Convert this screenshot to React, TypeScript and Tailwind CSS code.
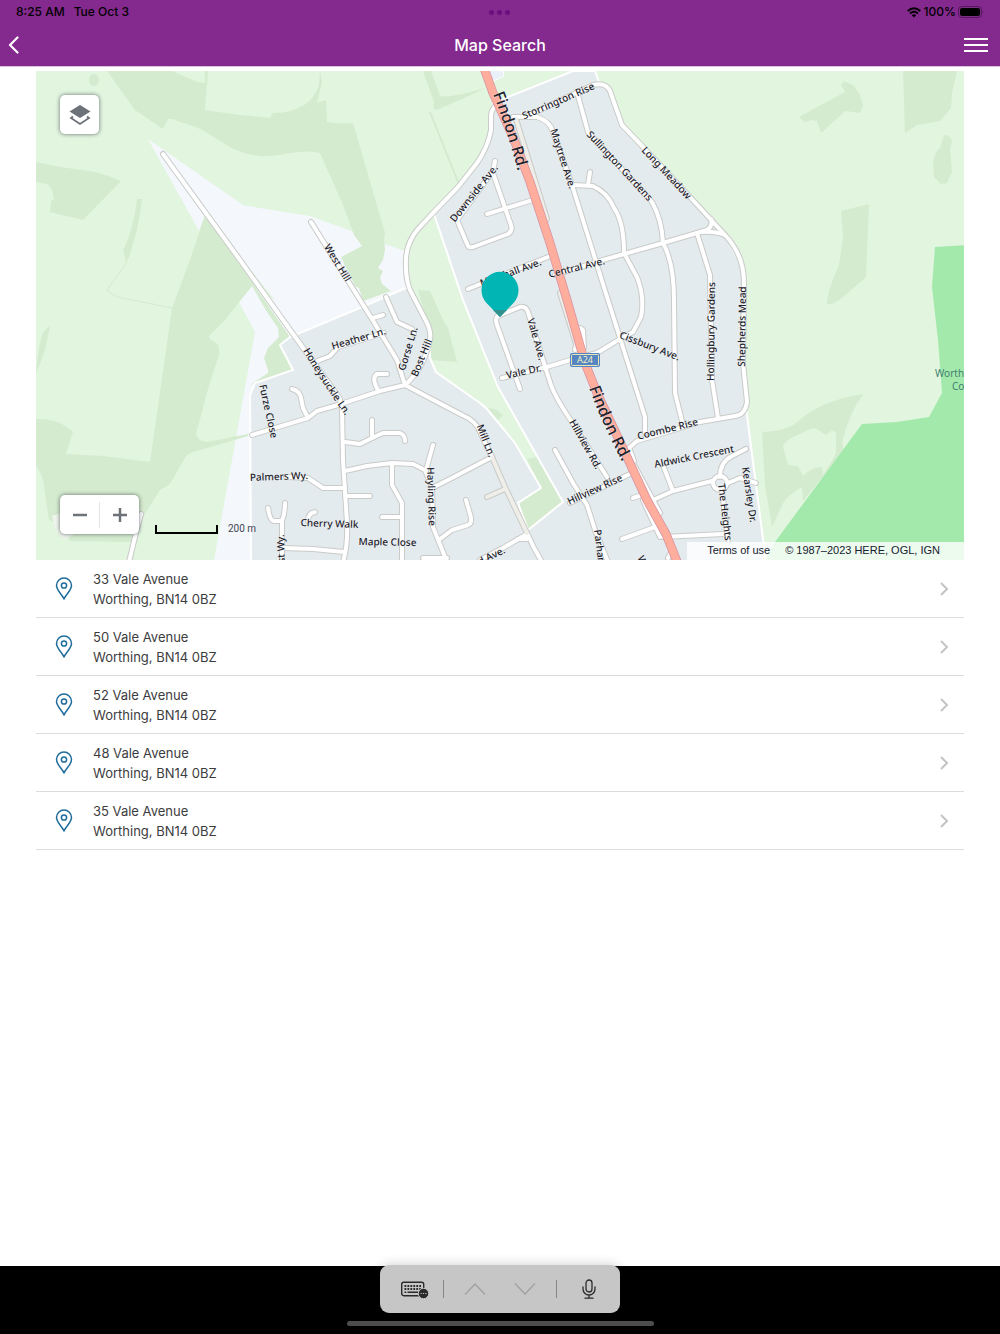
import React from "react";

type Label = { t: string; a: [number, number]; b: [number, number]; size?: number };

const WOODS = [
  "M107 71L135 110L163 129L168 119Q172 118 180 122Q198 127 206 132L225 144Q240 154 260 156Q270 157 290 153Q310 150 320 153L343 205L354 235L362 246L341 257L355 286L359 288L363 301L391 291L382 284L380 277L383 271L378 268L383 260L385 250L384 240L385 233L353 123Q340 124 327 122L326 100L317 103L322 82L320 71L319 85Q312 103 300 107Q290 113 273 113L270 118L240 115L205 110L208 71L205 71L205 83L197 82L172 71Z",
  "M36 162L60 167L90 171Q108 175 121 181L83 220L50 212L51 201L54 199Q52 186 47 184L36 182Z",
  "M137 199L142 199Q140 215 137 230L129 257L126 262L123 250Q133 232 137 199Z",
  "M205 215L190 260L172 308L150 462L103 456L66 454L73 432Q58 418 36 419L36 466Q43 475 44 486L49 520L60 525L70 541L131 542L146 512L160 490L170 484L183 461Q187 452 200 450L248 436L248 434L207 442Q198 441 196 434L208 389L219 355Q220 345 215 342Q207 339 210 335L225 320L252 286L267 312L278 328L279 337L268 348L264 358L268 370L268 373L250 385L293 370L280 345L290 337Z",
  "M423 71L431 71L440 96Q452 98 485 88L473 94L437 110L433 108L434 102Z",
  "M418 290L430 291L443 320L448 328L457 362L430 360L431 335Z",
  "M799 117L845 92L841 85L844 81L853 85L860 95L863 105L860 113L845 111L821 133L817 121L812 120L805 122Z",
  "M903 71L957 71L952 93L951 108L940 121L917 125L905 133Z",
  "M944 135Q951 135 952 142L950 149L952 172L947 183L941 184L934 177L933 163L936 152L940 148Z",
  "M841 211L869 204L866 277L843 297Q832 306 827 304Q827 292 839 265L843 237Z",
  "M762 432Q780 432 795 424Q820 400 864 394Q850 410 842 443L844 450L803 501L802 487Q790 493 783 503L772 527L765 485Z",
  "M518 503L541 488L527 459L538 457L563 502L528 530Z",
  "M487 408L495 409L503 415L498 420Z",
  "M36 374Q37 352 43 332L50 326L45 350Z",
];

const CLEARINGS = [
  "M783 447Q784 440 802 433Q812 427 817 429L826 435Q834 427 836 434L836 453L832 461L823 475L822 467Q812 467 803 476L798 466L788 465Z",
];

const ROADS = [
  "M163 154L240 260L283 320L340 399L342 410L343 460L347 523Q348 545 343 562",
  "M311 222L372 319L383 337L397 360L405 385",
  "M373 318L383 315",
  "M386 297L397 322L412 329L414 334",
  "M498 104Q491 109 491 116L491 130Q488 147 477 163L458 187L433 213L418 229Q407 242 406 258Q405 277 410 290L425 319Q433 333 429 343Q424 368 405 385",
  "M405 385L462 415Q477 421 481 434L492 457",
  "M527 533L534 548L542 562",
  "M405 385L380 391L338 405L317 411L308 418L252 435",
  "M292 389Q300 391 301 398L303 408L308 418",
  "M387 374L377 374Q371 378 378 390",
  "M315 362L330 356L338 347L384 333",
  "M345 442L360 444L372 438L383 433L400 433Q405 435 405 441",
  "M372 420L372 438",
  "M345 471L367 466L392 463L413 464L425 470L432 487L433 527L447 562",
  "M433 445L426 470",
  "M392 463L392 485L402 503L402 562",
  "M382 517L402 517",
  "M345 488L323 488L308 478L286 477",
  "M345 496L370 496",
  "M268 508Q270 521 274 521L282 521Q285 514 285 503",
  "M282 521L282 562",
  "M283 548L313 549L344 552",
  "M315 512Q308 513 308 521",
  "M440 539L452 530L468 525Q473 523 470 514L466 500",
  "M423 558L447 558",
  "M434 487L450 479L492 457",
  "M527 534L503 548L480 560",
  "M527 539L518 539",
  "M495 161L493 171L457 220L468 246Q469 248 473 247L508 234Q513 231 511 225L493 173",
  "M487 214L533 200",
  "M468 289L548 257",
  "M555 275L603 260L663 243L707 230Q713 226 711 219",
  "M700 232Q715 231 725 235",
  "M513 117L525 117L593 85Q606 82 610 91L622 125L643 147L690 197L725 235Q744 255 744 283L743 363L747 402Q745 415 735 416L700 422L637 441L629 448L634 461",
  "M525 117L537 117Q550 121 553 132L572 185L608 300L620 338L645 417L645 433",
  "M573 185L593 186Q608 193 614 208Q624 222 624 253L637 277Q645 297 641 317L633 332L620 339",
  "M590 172L588 185",
  "M577 92L588 132L652 202Q662 220 663 243Q674 263 674 300L675 393L683 425",
  "M697 233L710 275L712 380L718 418",
  "M520 389L497 325Q494 317 500 315L520 307Q526 306 528 312L543 360L550 382Q554 396 572 422L607 477",
  "M502 378L547 367L570 360L597 353L620 339",
  "M570 503L632 473",
  "M555 450L573 483L587 505L595 530L608 562",
  "M633 498L645 494",
  "M653 500L673 491L712 481",
  "M728 483L740 478L756 483",
  "M720 477Q720 462 732 456L746 449",
  "M664 468L673 491",
  "M622 539L655 527",
  "M643 500L660 537",
  "M633 463L660 513",
  "M663 537L723 534",
  "M722 490L728 540",
  "M713 483a7 7 0 1 0 14 0a7 7 0 1 0 -14 0",
  "M575 350L580 328L583 330L584 348",
  "M668 558L672 551",
];

const LANES = [
  "M492 457L505 487L527 533",
  "M487 497L505 489",
  "M516 119L547 219",
  "M560 293L577 347",
];

const LABELS: Label[] = [
  { t: "Storrington Rise", a: [522, 116], b: [594, 85] },
  { t: "Maytree Ave.", a: [554, 129], b: [573, 188] },
  { t: "Long Meadow", a: [644, 148], b: [690, 197] },
  { t: "Downside Ave.", a: [452, 220], b: [495, 166] },
  { t: "Marshall Ave.", a: [480, 283], b: [541, 261] },
  { t: "Central Ave.", a: [548, 274], b: [605, 260] },
  { t: "West Hill", a: [326, 243], b: [350, 282] },
  { t: "Heather Ln.", a: [331, 346], b: [386, 330] },
  { t: "Gorse Ln.", a: [401, 370], b: [414, 327] },
  { t: "Bost Hill", a: [413, 377], b: [429, 338] },
  { t: "Furze Close", a: [263, 384], b: [275, 438] },
  { t: "Mill Ln.", a: [480, 424], b: [493, 457] },
  { t: "Palmers Wy.", a: [250, 477], b: [308, 475] },
  { t: "Hayling Rise", a: [431, 466], b: [433, 527] },
  { t: "Cherry Walk", a: [301, 522], b: [358, 524] },
  { t: "Maple Close", a: [358, 541], b: [417, 542] },
  { t: "West Wy.", a: [281, 577], b: [280, 535] },
  { t: "Mead Ave.", a: [460, 571], b: [504, 549] },
  { t: "Vale Ave.", a: [531, 318], b: [543, 360] },
  { t: "Vale Dr.", a: [505, 375], b: [542, 367] },
  { t: "Cissbury Ave.", a: [620, 334], b: [680, 357] },
  { t: "Hollingbury Gardens", a: [710, 382], b: [711, 281] },
  { t: "Shepherds Mead", a: [741, 367], b: [742, 286] },
  { t: "Hillview Rd.", a: [572, 419], b: [600, 469] },
  { t: "Hillview Rise", a: [566, 502], b: [623, 476] },
  { t: "Coombe Rise", a: [637, 436], b: [698, 421] },
  { t: "Aldwick Crescent", a: [654, 464], b: [734, 448] },
  { t: "The Heights", a: [722, 483], b: [729, 541] },
  { t: "Kearsley Dr.", a: [746, 467], b: [754, 522] },
  { t: "Parham Rd.", a: [598, 530], b: [605, 584] },
];

const CURVED = [
  { id: "findon-north", d: "M493 94Q507 130 519 175", t: "Findon Rd.", size: 16 },
  { id: "findon-south", d: "M589 388Q604 429 628 472", t: "Findon Rd.", size: 16 },
  { id: "sullington", d: "M586 135Q620 171 655 209", t: "Sullington Gardens", size: 10 },
  { id: "honeysuckle", d: "M303 351Q324 386 352 425", t: "Honeysuckle Ln.", size: 10 },
];

const MAIN_ROAD =
  "M484 68L493 93L513 137L530 182L550 243L567 300L585 363L597 393L627 457L647 500L666 534L678 564";

function MapLabel({ t, a, b, size = 10 }: Label) {
  const angle = (Math.atan2(b[1] - a[1], b[0] - a[0]) * 180) / Math.PI;
  const x = (a[0] + b[0]) / 2;
  const y = (a[1] + b[1]) / 2;
  return (
    <text
      x={x}
      y={y}
      fontSize={size}
      textAnchor="middle"
      dominantBaseline="central"
      transform={`rotate(${angle} ${x} ${y})`}
    >
      {t}
    </text>
  );
}

function StreetMap() {
  return (
    <svg
      viewBox="36 71 928 489"
      preserveAspectRatio="xMidYMid slice"
      className="block h-[489px] w-full bg-[#e1f5df]"
      role="img"
      aria-label="Street map around Vale Avenue"
    >
      <path d="M148 139L243 205L260 208L310 216L357 233L385 244L405 251L410 287L300 340L255 400L255 560L214 560L255 332L239 302L252 286L275 300L205 215L199 231Z" fill="#f4f7fb" />
      <g fill="#d5ebcf">
        <ellipse cx="94" cy="80" rx="5" ry="6" />
        {WOODS.map((d) => (
          <path key={d} d={d} />
        ))}
      </g>
      <g fill="none" stroke="#d5ebcf">
        <path d="M127 262L107 290Q115 298 128 299L172 308" />
        <path d="M430 112L458 182" strokeWidth="2" />
      </g>
      {CLEARINGS.map((d) => (
        <path key={d} d={d} fill="#e1f5df" />
      ))}
      <path d="M935 247L966 245L966 562L762 562L775 542L862 424L897 422L929 417L942 393L938 340L932 287Z" fill="#a3e9ac" />
      <path
        d="M280 345L290 337L355 310L408 287L429 330L430 358L436 372L480 403L487 409L515 443L541 488L518 503L528 530L563 502L498 387L463 300L434 214L458 187L477 163L491 130L493 103L573 71L595 71L599 82L610 91L622 125L725 235L744 270L745 400L766 562L251 562L250 395L255 383L293 370Z"
        fill="#e4ebee"
        stroke="#fff"
        strokeWidth="2"
      />
      <path d="M486 70L503 70L504 76L491 82Z" fill="#e9f0f8" stroke="#fff" />
      <path d="M52 516l9 -3v8l18 10 l-14 9l-9 -8z" fill="#eef5ec" />

      <g fill="none" strokeLinecap="round" strokeLinejoin="round">
        <g stroke="#c9cbc8" strokeWidth="6">
          {[...LANES, ...ROADS].map((d) => (
            <path key={d} d={d} />
          ))}
          <path d="M141 514L136 533L129 562" />
        </g>
        <g stroke="#fff" strokeWidth="4">
          {ROADS.map((d) => (
            <path key={d} d={d} />
          ))}
          <path d="M141 514L136 533L129 562" />
        </g>
        <g stroke="#efeee9" strokeWidth="4">
          {LANES.map((d) => (
            <path key={d} d={d} />
          ))}
        </g>
        <path d={MAIN_ROAD} stroke="#d792a0" strokeWidth="9" />
        <path d={MAIN_ROAD} stroke="#ffad9d" strokeWidth="7.5" />
      </g>

      <rect x="570" y="353" width="30" height="14" rx="2" fill="#5585c2" />
      <rect x="571.5" y="354.500" width="27" height="11" rx="1" fill="none" stroke="#e9e6b4" />

      <g
        fontFamily="'Noto Sans', sans-serif"
        fontWeight="500"
        fill="#1d222c"
        stroke="#f4f7f8"
        strokeOpacity="0.5"
        strokeWidth="1"
        style={{ paintOrder: "stroke" }}
      >
        {LABELS.map((l) => (
          <MapLabel key={l.t} {...l} />
        ))}
        {CURVED.map((c) => (
          <g key={c.id}>
            <path id={c.id} d={c.d} fill="none" stroke="none" />
            <text fontSize={c.size}>
              <textPath href={`#${c.id}`}>{c.t}</textPath>
            </text>
          </g>
        ))}
        <text x="641" y="560" fontSize="10" transform="rotate(65 641 556)">
          Wallace Ave.
        </text>
      </g>
      <g fontFamily="'Noto Sans', sans-serif" fontSize="10">
        <text x="585" y="363" fontSize="9" textAnchor="middle" fill="#f3f0c0">
          A24
        </text>
        <g fill="#41806e">
          <text x="935" y="377">Worthing</text>
          <text x="952" y="390">Course</text>
        </g>
      </g>

      <path d="M500 317L487 303.500A18.500 18.500 0 1 1 513 303.500Z" fill="#00b5b3" />
      <path d="M493 310H507L500 317Z" fill="#32908f" />
    </svg>
  );
}

function LayersIcon() {
  return (
    <svg viewBox="0 0 22 22" className="size-[22px]" aria-hidden="true">
      <path d="M11 1L21.500 7.500L11 14L.5 7.500Z" fill="#6d7178" />
      <path d="M4 12.500L2 14L11 20L20 14L18 12.500" fill="none" stroke="#6d7178" strokeWidth="1.800" />
    </svg>
  );
}

function PinIcon() {
  return (
    <svg viewBox="0 0 18 24" className="h-6 w-[18px] shrink-0" fill="none" stroke="#1f6d9c" strokeWidth="1.500" aria-hidden="true">
      <path d="M9 22C7.500 18 1.500 13.500 1.500 8.600A7.500 7.500 0 0 1 16.500 8.600C16.500 13.500 10.500 18 9 22Z" strokeLinejoin="round" />
      <circle cx="9" cy="8.500" r="2.600" />
    </svg>
  );
}

function StatusBar() {
  return (
    <div className="grid h-6 grid-cols-3 items-center px-4 text-xs leading-6 font-medium text-black">
      <div className="flex gap-[9px]">
        <span>8:25 AM</span>
        <span>Tue Oct 3</span>
      </div>
      <div className="flex justify-center gap-[3px]">
        <i className="size-[5px] rounded-full bg-[#6b0f80]" />
        <i className="size-[5px] rounded-full bg-[#6b0f80]" />
        <i className="size-[5px] rounded-full bg-[#6b0f80]" />
      </div>
      <div className="flex items-center justify-end gap-[2px]">
        <svg viewBox="0 0 14 11" className="mr-px h-[11px] w-[14px]" fill="none" stroke="#000" strokeWidth="1.900" aria-hidden="true">
          <path d="M.7 4Q7 -1.600 13.300 4M3 6.500Q7 3 11 6.500" />
          <path d="M7 10.500L4.800 8.200Q7 6.500 9.200 8.200Z" fill="#000" stroke="none" />
        </svg>
        <span>100%</span>
        <svg viewBox="0 0 26 12" className="h-3 w-[26px]" aria-hidden="true">
          <rect x=".5" y=".5" width="23" height="11" rx="3.500" fill="none" stroke="#54195c" />
          <rect x="2" y="2" width="20" height="8" rx="2" />
          <path d="M24.500 4Q26 6 24.500 8Z" fill="#54195c" />
        </svg>
      </div>
    </div>
  );
}

const STREET_NUMBERS = [33, 50, 52, 48, 35];

export default function App() {
  return (
    <div className="flex min-h-screen flex-col bg-white font-['Inter',sans-serif] text-[#3c3c3e]">
      <header className="border-b border-[#d9c3db] bg-[#84298e]">
        <StatusBar />
        <div className="flex h-[42px] items-center justify-between pr-3 pl-2 text-white">
          <button type="button" aria-label="Back" className="flex w-7">
            <svg viewBox="0 0 12 18" className="h-[18px] w-3" fill="none" stroke="currentColor" strokeWidth="2.200" strokeLinecap="round" strokeLinejoin="round" aria-hidden="true">
              <path d="M9.500 1.500L2 9L9.500 16.500" />
            </svg>
          </button>
          <h1 className="text-base font-medium">Map Search</h1>
          <button type="button" aria-label="Menu" className="flex w-6 flex-col gap-1">
            <span className="h-[2px] w-full bg-white" />
            <span className="h-[2px] w-full bg-white" />
            <span className="h-[2px] w-full bg-white" />
          </button>
        </div>
      </header>

      <main className="flex-1 px-9 pt-1">
        <section className="relative overflow-hidden">
          <StreetMap />
          <button
            type="button"
            aria-label="Map layers"
            className="absolute top-6 left-6 flex size-[39px] items-center justify-center rounded-[5px] bg-white shadow-[0_0_4px_rgba(15,22,33,0.6)]"
          >
            <LayersIcon />
          </button>
          <div className="absolute bottom-[26px] left-6 flex h-[39px] items-center rounded-[5px] bg-white text-[#6d7178] shadow-[0_0_4px_rgba(15,22,33,0.6)]">
            <button type="button" aria-label="Zoom out" className="flex h-full w-[39px] items-center justify-center">
              <svg viewBox="0 0 14 14" className="size-[14px]" stroke="currentColor" strokeWidth="2.500" aria-hidden="true">
                <path d="M0 7H14" />
              </svg>
            </button>
            <span className="h-[26px] w-px bg-[#e3e4e6]" />
            <button type="button" aria-label="Zoom in" className="flex h-full w-[39px] items-center justify-center">
              <svg viewBox="0 0 14 14" className="size-[14px]" stroke="currentColor" strokeWidth="2.500" aria-hidden="true">
                <path d="M0 7H14M7 0V14" />
              </svg>
            </button>
          </div>
          <div className="absolute bottom-[23px] left-[119px] flex items-center gap-[10px] font-['Roboto',sans-serif] text-[10px] leading-4 text-[#3f4650]">
            <span className="h-[9px] w-[63px] border-2 border-t-0 border-black" />
            <span>200 m</span>
          </div>
          <div className="absolute right-0 bottom-0 flex h-[18px] items-center gap-[15px] bg-white/80 pr-6 pb-px pl-5 font-['Liberation_Sans',sans-serif] text-[11px] text-[#15202e]">
            <a href="#terms">Terms of use</a>
            <span>© 1987–2023 HERE, OGL, IGN</span>
          </div>
        </section>

        <ul>
          {STREET_NUMBERS.map((n) => (
            <li key={n} className="border-b border-[#dcdcde]">
              <button type="button" className="flex min-h-[57px] w-full items-center pr-[15px] pl-[19px] text-left text-[13px]">
                <PinIcon />
                <span className="ml-5 flex-1">
                  <span className="block leading-5">{n} Vale Avenue</span>
                  <span className="block leading-5">Worthing, BN14 0BZ</span>
                </span>
                <svg viewBox="0 0 10 14" className="h-[14px] w-[10px]" fill="none" stroke="#c4c4c6" strokeWidth="2" aria-hidden="true">
                  <path d="M2 1L8 7L2 13" />
                </svg>
              </button>
            </li>
          ))}
        </ul>
      </main>

      <footer className="flex h-[68px] flex-col items-center bg-black">
        <div className="-mt-px flex h-12 w-60 shrink-0 items-center rounded-[9px] bg-[#c6c6c6] pr-6 pl-5 text-[#2b2b2b] shadow-[0_0_12px_rgba(0,0,0,0.2)]">
          <button type="button" aria-label="Keyboard options">
            <svg viewBox="0 0 30 20" className="h-5 w-[30px]" fill="none" stroke="currentColor" aria-hidden="true">
              <rect x="1.700" y="3.200" width="22" height="13.500" rx="2" strokeWidth="1.400" />
              <path d="M4.500 7H21M4.500 10H21" strokeWidth="1.800" strokeDasharray="1.800 1.150" />
              <path d="M4.500 13.300H6.300M7.500 13.300H18" strokeWidth="1.500" />
              <circle cx="23.500" cy="14.500" r="5.200" fill="currentColor" stroke="#c6c6c6" />
              <path d="M20.500 14.500H27" strokeWidth="1.200" stroke="#c6c6c6" strokeDasharray="1.200 1.200" />
            </svg>
          </button>
          <span className="ml-[13px] h-[18px] w-px bg-[#858585]" />
          <button type="button" aria-label="Previous field" className="ml-5">
            <svg viewBox="0 0 22 14" className="h-[14px] w-[22px]" fill="none" stroke="#a0a0a0" strokeWidth="1.300" aria-hidden="true">
              <path d="M1 12.500L11 2L21 12.500" />
            </svg>
          </button>
          <button type="button" aria-label="Next field" className="ml-7">
            <svg viewBox="0 0 22 14" className="h-[14px] w-[22px]" fill="none" stroke="#a0a0a0" strokeWidth="1.300" aria-hidden="true">
              <path d="M1 1.500L11 12L21 1.500" />
            </svg>
          </button>
          <span className="ml-5 h-[18px] w-px bg-[#858585]" />
          <button type="button" aria-label="Dictate" className="ml-auto">
            <svg viewBox="0 0 14 20" className="h-5 w-[14px]" fill="none" stroke="currentColor" strokeWidth="1.300" strokeLinecap="round" aria-hidden="true">
              <rect x="4" y="1" width="6" height="12" rx="3" />
              <path d="M1 8V10A6 6 0 0 0 13 10V8M7 16V19M3 19.200H11" />
            </svg>
          </button>
        </div>
        <div className="mt-2 h-[5px] w-[307px] rounded-full bg-[#4d4d4d]" />
      </footer>
    </div>
  );
}
